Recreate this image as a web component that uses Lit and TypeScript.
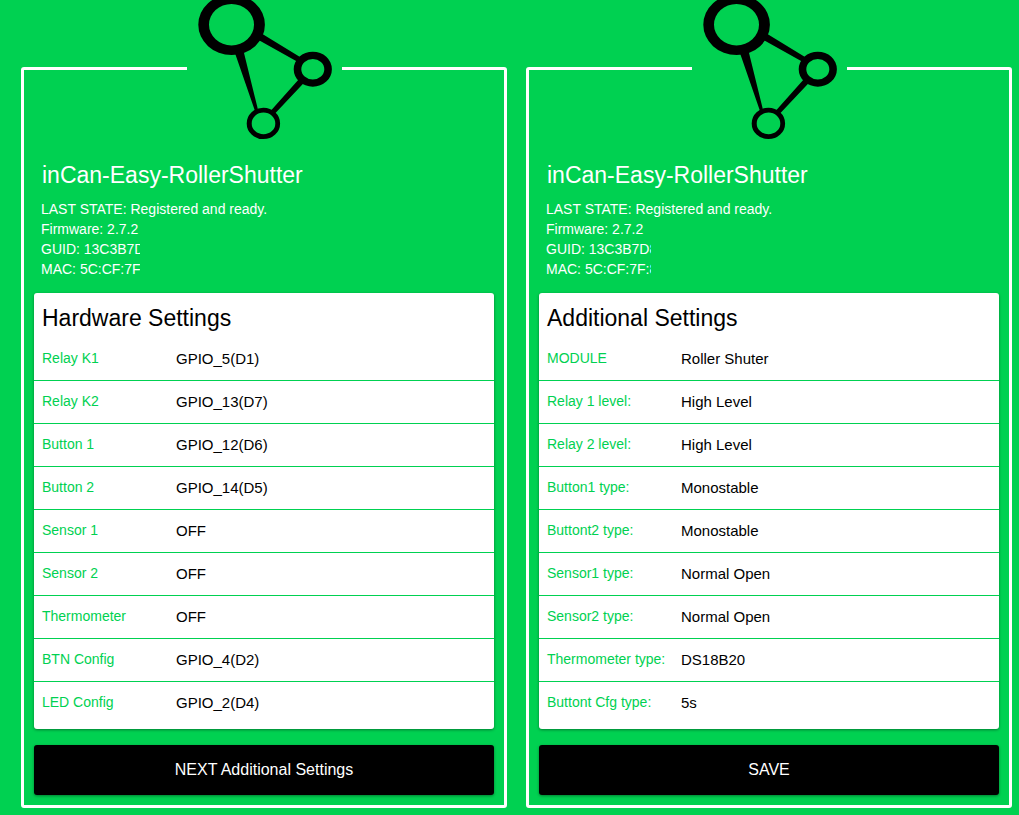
import { LitElement, html, css } from "lit";
import { customElement, property } from "lit/decorators.js";

interface Setting {
  label: string;
  value: string;
}

interface Panel {
  heading: string;
  guid: string;
  mac: string;
  idWidth: number;
  action: string;
  settings: Setting[];
}

const PANELS: Panel[] = [
  {
    heading: "Hardware Settings",
    guid: "13C3B7D",
    mac: "5C:CF:7F",
    idWidth: 99,
    action: "NEXT Additional Settings",
    settings: [
      { label: "Relay K1", value: "GPIO_5(D1)" },
      { label: "Relay K2", value: "GPIO_13(D7)" },
      { label: "Button 1", value: "GPIO_12(D6)" },
      { label: "Button 2", value: "GPIO_14(D5)" },
      { label: "Sensor 1", value: "OFF" },
      { label: "Sensor 2", value: "OFF" },
      { label: "Thermometer", value: "OFF" },
      { label: "BTN Config", value: "GPIO_4(D2)" },
      { label: "LED Config", value: "GPIO_2(D4)" },
    ],
  },
  {
    heading: "Additional Settings",
    guid: "13C3B7D8",
    mac: "5C:CF:7F:8",
    idWidth: 105,
    action: "SAVE",
    settings: [
      { label: "MODULE", value: "Roller Shuter" },
      { label: "Relay 1 level:", value: "High Level" },
      { label: "Relay 2 level:", value: "High Level" },
      { label: "Button1 type:", value: "Monostable" },
      { label: "Buttont2 type:", value: "Monostable" },
      { label: "Sensor1 type:", value: "Normal Open" },
      { label: "Sensor2 type:", value: "Normal Open" },
      { label: "Thermometer type:", value: "DS18B20" },
      { label: "Buttont Cfg type:", value: "5s" },
    ],
  },
];

@customElement("settings-panel")
class SettingsPanel extends LitElement {
  @property({ attribute: false }) panel!: Panel;

  static styles = css`
    :host {
      display: block;
      box-sizing: border-box;
      border: 3px solid #fff;
      border-radius: 3px;
      padding: 0 10px 10px;
    }
    .logo {
      display: block;
      width: 155px;
      height: 150px;
      margin: -70px auto 0;
      background: #00d151;
    }
    .title {
      margin: 0;
      padding: 10px 8px 0;
      font-size: 23px;
      line-height: 30px;
      font-weight: 400;
    }
    .info {
      padding: 9px 7px 14px;
      font-size: 14px;
      line-height: 20px;
    }
    .line {
      margin: 0;
      overflow: hidden;
      white-space: nowrap;
    }
    .card {
      background: #fff;
      border-radius: 3px;
      padding-bottom: 4px;
      box-shadow: 0 1px 3px rgba(0, 0, 0, 0.4);
    }
    .heading {
      margin: 0;
      padding: 10px 8px 5px;
      color: #000;
      font-size: 23px;
      line-height: 30px;
      font-weight: 400;
    }
    .row {
      display: grid;
      grid-template-columns: 134px 1fr;
      align-items: center;
      height: 40px;
      padding: 0 0 2px 8px;
      border-bottom: 1px solid #00d151;
    }
    .row:last-child {
      border-bottom-color: transparent;
    }
    .label {
      color: #00d151;
      font-size: 14px;
      line-height: 20px;
      white-space: nowrap;
    }
    .value {
      appearance: none;
      width: 100%;
      height: 40px;
      margin: 0;
      padding: 0;
      border: 0;
      background: transparent;
      color: #000;
      font-family: inherit;
      font-size: 15px;
    }
    .action {
      display: block;
      width: 100%;
      height: 50px;
      margin: 16px 0 0;
      padding: 0;
      border: 0;
      border-radius: 3px;
      background: #000;
      color: #fff;
      font-family: inherit;
      font-size: 16px;
      box-shadow: 0 1px 3px rgba(0, 0, 0, 0.4);
    }
  `;

  render() {
    const p = this.panel;
    return html`
      <svg class="logo" viewBox="0 0 155 150" overflow="visible" aria-hidden="true">
        <path
          fill-rule="evenodd"
          d="M11.3 24.7a33.3 30.3 0 1 0 66.6 0a33.3 30.3 0 1 0 -66.6 0z
             M22 24.7a22.5 20.7 0 1 0 45 0a22.5 20.7 0 1 0 -45 0z
             M106.7 69.2a19.1 17.5 0 1 0 38.2 0a19.1 17.5 0 1 0 -38.2 0z
             M114.3 69.2a11.5 10.2 0 1 0 23 0a11.5 10.2 0 1 0 -23 0z
             M59.7 123.4a16.7 15.7 0 1 0 33.4 0a16.7 15.7 0 1 0 -33.4 0z
             M64.7 123.4a11.8 10.8 0 1 0 23.6 0a11.8 10.8 0 1 0 -23.6 0z"
        />
        <path
          d="M75 33.8L113 57L110 61.5L72 40.3z
             M47.6 52L56.4 50.5L71.3 111L68 111z
             M112.5 78.5L117 82.8L88.5 113L84 110.5z"
        />
      </svg>
      <h1 class="title">inCan-Easy-RollerShutter</h1>
      <div class="info">
        <p class="line">LAST STATE: Registered and ready.</p>
        <p class="line">Firmware: 2.7.2</p>
        <p class="line" style="width:${p.idWidth}px">GUID: ${p.guid}</p>
        <p class="line" style="width:${p.idWidth}px">MAC: ${p.mac}</p>
      </div>
      <section class="card">
        <h2 class="heading">${p.heading}</h2>
        ${p.settings.map(
          (s, i) => html`
            <div class="row">
              <label class="label" for="setting-${i}">${s.label}</label>
              <select class="value" id="setting-${i}">
                <option>${s.value}</option>
              </select>
            </div>
          `
        )}
      </section>
      <button class="action" type="button">${p.action}</button>
    `;
  }
}

@customElement("app-root")
class AppRoot extends LitElement {
  static styles = css`
    :host {
      display: grid;
      grid-template-columns: 1fr 1fr;
      gap: 19px;
      align-items: start;
      box-sizing: border-box;
      min-height: 100vh;
      padding: 67px 7px 7px 21px;
      overflow: hidden;
      background: #00d151;
      color: #fff;
      font-family: "Liberation Sans", Arial, sans-serif;
    }
  `;

  render() {
    return PANELS.map((p) => html`<settings-panel .panel=${p}></settings-panel>`);
  }
}
